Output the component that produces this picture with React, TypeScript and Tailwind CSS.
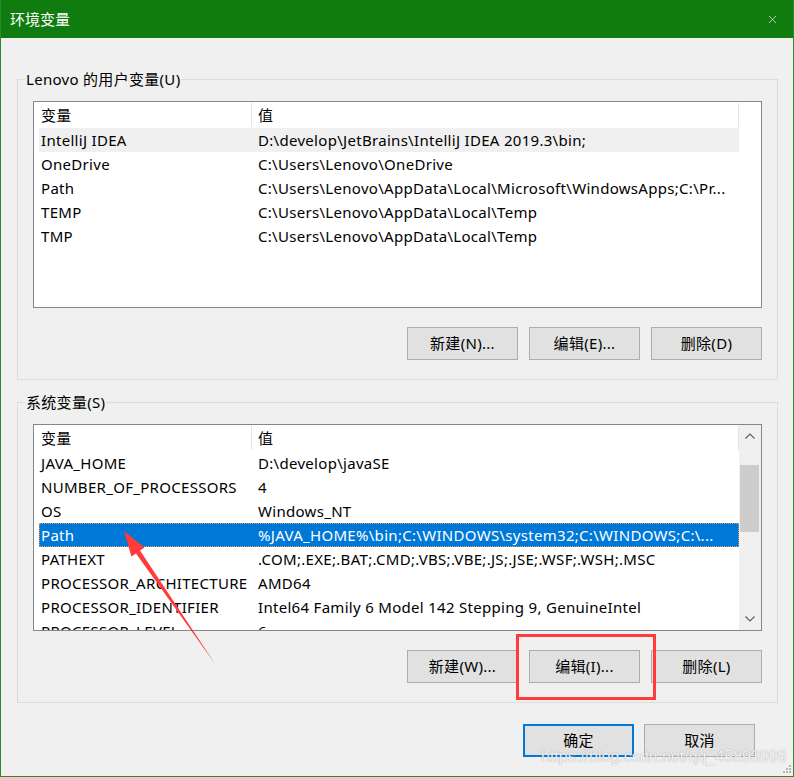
import { X } from "lucide-react"

type Row = [string, string]

const userVars: Row[] = [
  ["IntelliJ IDEA", "D:\\develop\\JetBrains\\IntelliJ IDEA 2019.3\\bin;"],
  ["OneDrive", "C:\\Users\\Lenovo\\OneDrive"],
  ["Path", "C:\\Users\\Lenovo\\AppData\\Local\\Microsoft\\WindowsApps;C:\\Pr..."],
  ["TEMP", "C:\\Users\\Lenovo\\AppData\\Local\\Temp"],
  ["TMP", "C:\\Users\\Lenovo\\AppData\\Local\\Temp"],
]

const systemVars: Row[] = [
  ["JAVA_HOME", "D:\\develop\\javaSE"],
  ["NUMBER_OF_PROCESSORS", "4"],
  ["OS", "Windows_NT"],
  ["Path", "%JAVA_HOME%\\bin;C:\\WINDOWS\\system32;C:\\WINDOWS;C:\\..."],
  ["PATHEXT", ".COM;.EXE;.BAT;.CMD;.VBS;.VBE;.JS;.JSE;.WSF;.WSH;.MSC"],
  ["PROCESSOR_ARCHITECTURE", "AMD64"],
  ["PROCESSOR_IDENTIFIER", "Intel64 Family 6 Model 142 Stepping 9, GenuineIntel"],
  ["PROCESSOR_LEVEL", "6"],
]

function VarRow({ row, state }: { row: Row; state?: "hover" | "selected" }) {
  const tone =
    state === "selected"
      ? "bg-[#0078d7] text-white outline outline-1 outline-dotted outline-[#d99a5b] -outline-offset-1"
      : state === "hover"
        ? "bg-[#f0f0f0]"
        : ""
  return (
    <div className={`flex h-[24px] items-center leading-[24px] ${tone}`}>
      <div className="w-[213px] shrink-0 overflow-hidden whitespace-nowrap pl-[2px]">{row[0]}</div>
      <div className="w-[487px] shrink-0 overflow-hidden whitespace-nowrap pl-[6px]">{row[1]}</div>
    </div>
  )
}

function Chevron({ down }: { down?: boolean }) {
  return (
    <svg width="10" height="6" viewBox="0 0 10 6" className={down ? "rotate-180" : ""}>
      <path d="M0.5 5.5 L5 1 L9.5 5.5" fill="none" stroke="#606060" strokeWidth="1.2" />
    </svg>
  )
}

function VarList({ rows, hoverIndex, selectedIndex, scroll }: { rows: Row[]; hoverIndex?: number; selectedIndex?: number; scroll?: boolean }) {
  return (
    <div className="flex h-[207px] overflow-hidden border border-[#828790] bg-white">
      <div className="w-[705px] shrink-0 pl-[5px]">
        <div className="flex h-[26px] items-center">
          <div className="flex h-[24px] w-[213px] items-center border-r border-[#e5e5e5] pl-[2px]">变量</div>
          <div className="flex h-[24px] w-[487px] items-center border-r border-[#e5e5e5] pl-[6px]">值</div>
        </div>
        {rows.map((r, i) => (
          <VarRow key={r[0] + i} row={r} state={i === selectedIndex ? "selected" : i === hoverIndex ? "hover" : undefined} />
        ))}
      </div>
      {scroll && (
        <div className="flex w-[22px] shrink-0 flex-col bg-[#f0f0f0]">
          <div className="flex h-[22px] items-center justify-center">
            <Chevron />
          </div>
          <div className="mt-[18px] h-[67px] px-[1px]">
            <div className="h-full w-[19px] bg-[#cdcdcd]" />
          </div>
          <div className="flex-1" />
          <div className="flex h-[22px] items-center justify-center">
            <Chevron down />
          </div>
        </div>
      )}
    </div>
  )
}

function WinButton({ label, primary }: { label: string; primary?: boolean }) {
  return (
    <button
      className={`flex h-[33px] w-[111px] items-center justify-center bg-[#e1e1e1] text-[15px] ${primary ? "border-2 border-[#0078d7]" : "border border-[#adadad]"}`}
    >
      {label}
    </button>
  )
}

function GroupBox({ title, children, className }: { title: string; children: React.ReactNode; className: string }) {
  return (
    <fieldset className={`ml-[16px] mr-[15px] border border-[#dcdcdc] ${className}`}>
      <legend className="ml-[7px] px-[1px] leading-[20px]">{title}</legend>
      <div className="px-[15px] pb-[19px] pt-[12px]">{children}</div>
    </fieldset>
  )
}

export default function App() {
  return (
    <div className="relative flex h-[777px] w-[794px] flex-col overflow-hidden border-x border-b border-[#2b8a2b] bg-[#f0f0f0] font-['Noto_Sans','Noto_Sans_CJK_SC',sans-serif] text-[15px] tracking-[0.3px] text-black">
      {/* title bar */}
      <div className="flex h-[38px] shrink-0 items-center justify-between bg-[#107c10] pl-[9px] pr-[14px] text-white">
        <span className="tracking-normal">环境变量</span>
        <X className="h-[13px] w-[13px]" strokeWidth={1.2} />
      </div>

      <GroupBox title="Lenovo 的用户变量(U)" className="mt-[31px]">
        <VarList rows={userVars} hoverIndex={0} />
        <div className="mt-[19px] flex justify-end gap-[11px]">
          <WinButton label="新建(N)..." />
          <WinButton label="编辑(E)..." />
          <WinButton label="删除(D)" />
        </div>
      </GroupBox>

      <GroupBox title="系统变量(S)" className="mt-[12px]">
        <VarList rows={systemVars} selectedIndex={3} scroll />
        <div className="mt-[19px] flex justify-end gap-[11px]">
          <WinButton label="新建(W)..." />
          <WinButton label="编辑(I)..." />
          <WinButton label="删除(L)" />
        </div>
      </GroupBox>

      <div className="mt-[21px] flex justify-end gap-[10px] pr-[38px]">
        <WinButton label="确定" primary />
        <WinButton label="取消" />
      </div>

      {/* annotations drawn over the screenshot */}
      <div className="absolute left-[515px] top-[634px] h-[66px] w-[140px] border-[3px] border-[#ff3b3b]" />
      <svg className="absolute left-0 top-0" width="794" height="777" viewBox="0 0 794 777">
        <polygon
          points="123,531 143.6,547.5 139,550.6 214.5,664.5 135,553.4 130.4,556.5"
          fill="#ff3b3b"
        />
      </svg>
      <div className="absolute left-[540px] top-[747px] font-['Liberation_Sans',sans-serif] text-[16px] leading-[20px] tracking-normal text-white/90 [text-shadow:0_0_1px_rgba(0,0,0,0.45)]">
        https://blog.csdn.net/qq_45893999
      </div>
      <svg className="absolute left-[781px] top-[764px]" width="10" height="10" viewBox="0 0 10 10">
        <rect x="7" y="1" width="2" height="2" fill="#b5b5b5" />
        <rect x="4" y="4" width="2" height="2" fill="#b5b5b5" />
        <rect x="7" y="4" width="2" height="2" fill="#b5b5b5" />
        <rect x="1" y="7" width="2" height="2" fill="#b5b5b5" />
        <rect x="4" y="7" width="2" height="2" fill="#b5b5b5" />
        <rect x="7" y="7" width="2" height="2" fill="#b5b5b5" />
      </svg>
    </div>
  )
}
